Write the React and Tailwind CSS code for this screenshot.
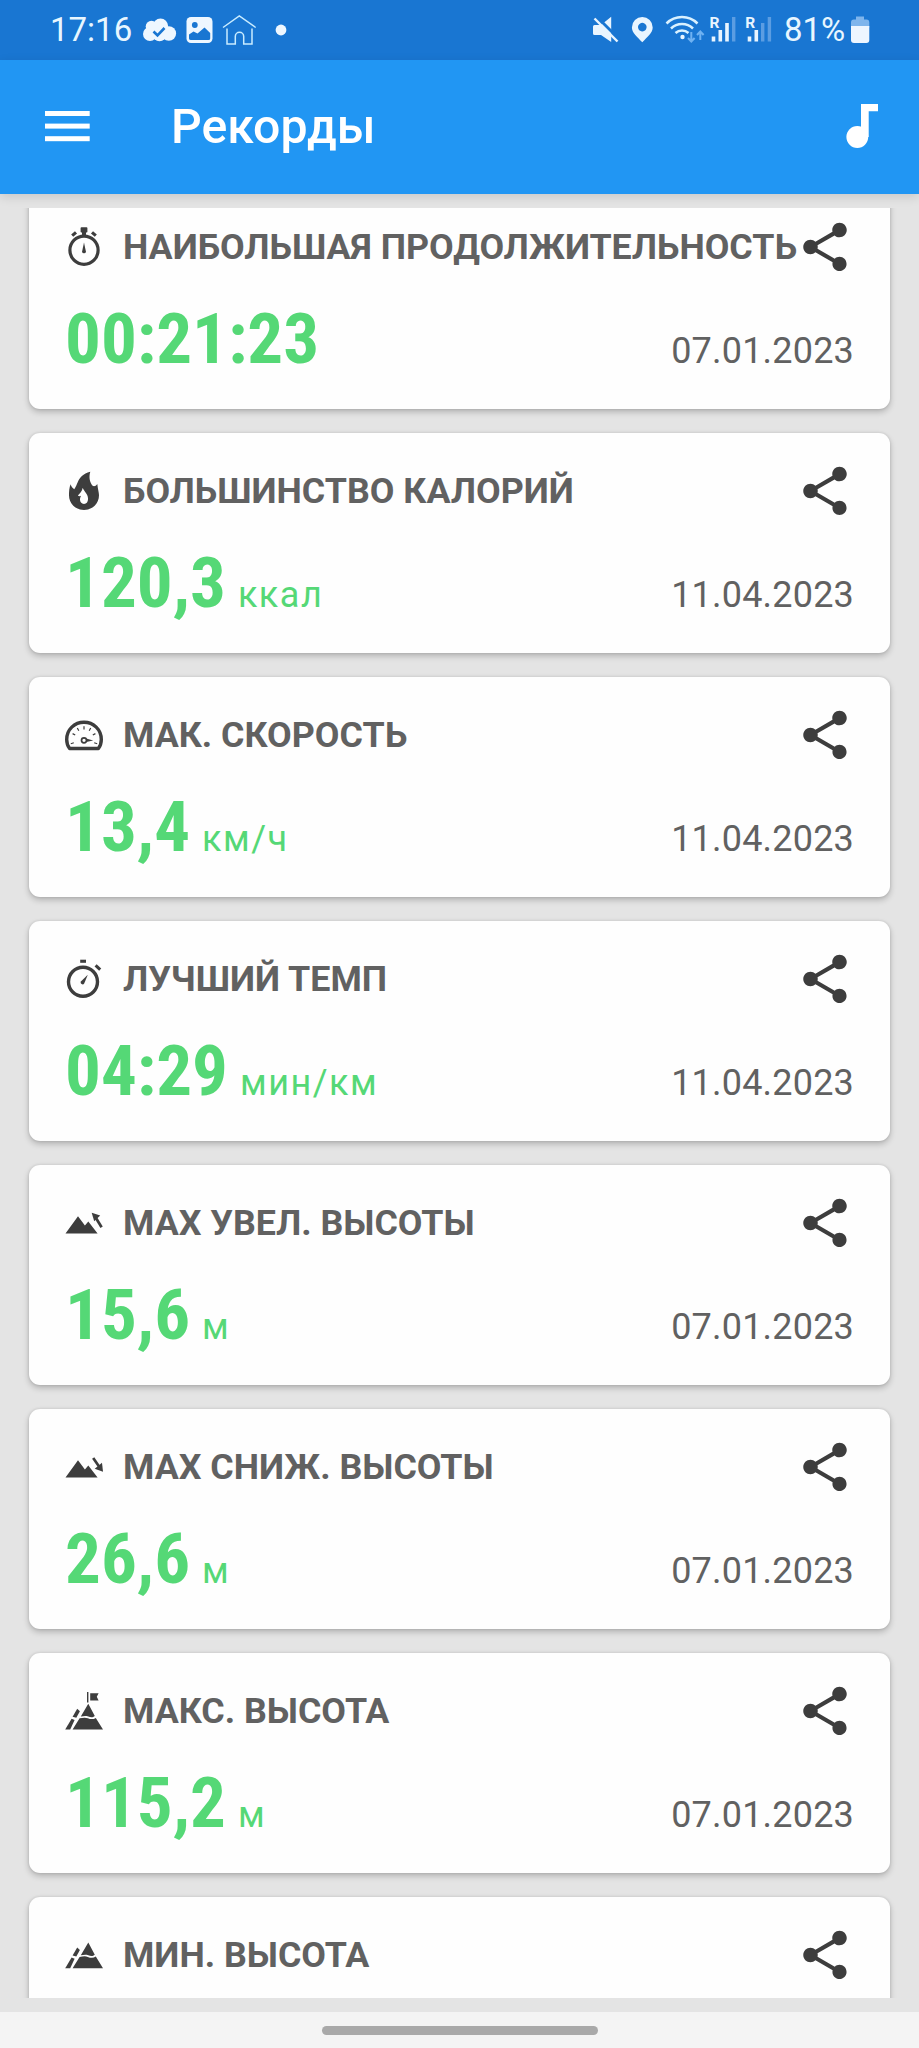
import React from "react";

const INK = "#3d3d3d";

function CardIcon({ children }) {
  return (
    <svg className="h-10 w-[38px] shrink-0 overflow-visible" viewBox="0 0 38 40" fill={INK}>
      {children}
    </svg>
  );
}

function DurationIcon() {
  return (
    <CardIcon>
      <circle cx="19" cy="22.2" r="14.1" fill="none" stroke={INK} strokeWidth="3.2" />
      <rect x="15.6" y="-0.8" width="6.8" height="5.4" rx="0.8" />
      <rect x="17" y="3" width="4" height="5" />
      <path d="M7.2 7.6 11 4.4M30.8 7.6 27 4.4" stroke={INK} strokeWidth="3.2" />
      <path d="M19 14.6 20.9 23.4a1.9 1.9 0 1 1-3.8 0z" />
    </CardIcon>
  );
}

function FlameIcon() {
  return (
    <CardIcon>
      <path
        fillRule="evenodd"
        d="M25.3-.2C18 1.500 14.500 6 12.600 10.500 11.500 13 10.800 15 9.300 17.300 7.600 16.200 6.200 14.600 5.600 12.300 4.300 15.500 4 19.500 4 23.300 4 31.500 10.500 37.900 19 37.900S34 31.500 34 23.300C34 20 32.800 17.300 32.300 12 30.800 14.200 29 14.800 27.600 13.800 25 10.800 23.500 5.500 25.300-.2zM17.800 15.800C18.500 19 22.800 21.500 23 26.300 23.200 29.800 21.600 32 19 32S15 29.800 15 27.500C15 26 15.500 25 16 23.800 15 24.600 13.800 24.300 12.800 23.600 14.800 21.500 17 19.300 17.800 15.800z"
      />
    </CardIcon>
  );
}

function SpeedIcon() {
  return (
    <CardIcon>
      <path
        d="M4.600 32.500C2.700 30 1.700 26.800 1.700 23.400 1.700 13.600 9.500 6.200 19 6.200S36.300 13.600 36.300 23.400C36.300 26.800 35.300 30 33.400 32.500z"
        fill="none"
        stroke={INK}
        strokeWidth="3.400"
        strokeLinejoin="round"
      />
      <path
        d="M19 10.200v3.200M12.300 12l1.500 2.700M25.700 12l-1.500 2.700M7.600 17.600l2.600 1.400M30.400 17.600l-2.600 1.400M5.800 27.800l3-1M32.200 27.800l-3-1"
        stroke={INK}
        strokeWidth="1.200"
      />
      <circle cx="19" cy="24.300" r="2.500" fill="none" stroke={INK} strokeWidth="1.700" />
      <path d="M21.200 22.600 28.200 24.400 21.200 26z" />
    </CardIcon>
  );
}

function PaceIcon() {
  return (
    <CardIcon>
      <circle cx="18" cy="21.800" r="14.500" fill="none" stroke={INK} strokeWidth="3.400" />
      <rect x="15.200" y="-0.300" width="5.800" height="3.100" />
      <path d="M30.600 5.400 35.200 9.600" stroke={INK} strokeWidth="3.100" />
      <path d="M22.800 14.800 19.200 23.400a1.900 1.900 0 1 1-3.300-1.900z" />
    </CardIcon>
  );
}

const MOUNTAIN = "M.5 29.600 13 12.200 19.900 21.400 23.300 17.600 32.600 29.600z";

function AscentIcon() {
  return (
    <CardIcon>
      <path d={MOUNTAIN} />
      <path d="M26.700 8.800 35.200 11.600 29.200 17.300z" />
      <path d="M30.500 13.200 36.600 23.200" stroke={INK} strokeWidth="2.700" />
    </CardIcon>
  );
}

function DescentIcon() {
  return (
    <CardIcon>
      <path d={MOUNTAIN} />
      <path d="M38 23.800 37 14.800 29.700 20.800z" />
      <path d="M28.200 10 34.400 19" stroke={INK} strokeWidth="2.700" />
    </CardIcon>
  );
}

function Peaks() {
  return (
    <>
      <path d="M23.300 11.800 29.800 24C27.500 26 25.500 25.300 23.300 24.500 20.800 23.600 18.500 24 15.800 24.600z" />
      <path d="M14.600 26.300C18 25.600 20.500 25.300 22.800 26.200 25.500 27.300 28.300 27.600 30.800 25.900L38 37.500H7.600z" />
      <path d="M12.200 16.800 14.900 19.200 11.300 25.800 7.600 24.800z" />
      <path d="M6.600 26.800 9.600 28 5.200 37.500H.2z" />
    </>
  );
}

function MaxHeightIcon() {
  return (
    <CardIcon>
      <Peaks />
      <path d="M22.700 0V10.600" stroke={INK} strokeWidth="1.400" />
      <path d="M25.200 1.200H33.600L31.800 4.800 33.600 8.500H25.200z" />
    </CardIcon>
  );
}

function MinHeightIcon() {
  return (
    <CardIcon>
      <g transform="translate(0 -5.300)">
        <Peaks />
      </g>
    </CardIcon>
  );
}

function ShareIcon() {
  return (
    <svg className="-mt-0.5 size-[58px] shrink-0" viewBox="0 0 24 24" fill={INK}>
      <path d="M18 16.080c-.76 0-1.440.3-1.960.770L8.910 12.700c.05-.230.090-.460.090-.700s-.040-.470-.090-.700l7.050-4.110c.54.500 1.250.810 2.040.810 1.660 0 3-1.340 3-3s-1.340-3-3-3-3 1.340-3 3c0 .240.040.470.090.700L8.040 9.810C7.500 9.310 6.790 9 6 9c-1.660 0-3 1.340-3 3s1.340 3 3 3c.79 0 1.500-.310 2.040-.810l7.120 4.160c-.05.210-.080.430-.080.650 0 1.610 1.310 2.920 2.920 2.920 1.610 0 2.920-1.310 2.920-2.920s-1.310-2.920-2.920-2.920z" />
    </svg>
  );
}

const RECORDS = [
  { icon: DurationIcon, label: "НАИБОЛЬШАЯ ПРОДОЛЖИТЕЛЬНОСТЬ", value: "00:21:23", date: "07.01.2023" },
  { icon: FlameIcon, label: "БОЛЬШИНСТВО КАЛОРИЙ", value: "120,3", unit: "ккал", date: "11.04.2023" },
  { icon: SpeedIcon, label: "МАК. СКОРОСТЬ", value: "13,4", unit: "км/ч", date: "11.04.2023" },
  { icon: PaceIcon, label: "ЛУЧШИЙ ТЕМП", value: "04:29", unit: "мин/км", date: "11.04.2023" },
  { icon: AscentIcon, label: "MAX УВЕЛ. ВЫСОТЫ", value: "15,6", unit: "м", date: "07.01.2023" },
  { icon: DescentIcon, label: "MAX СНИЖ. ВЫСОТЫ", value: "26,6", unit: "м", date: "07.01.2023" },
  { icon: MaxHeightIcon, label: "МАКС. ВЫСОТА", value: "115,2", unit: "м", date: "07.01.2023" },
  { icon: MinHeightIcon, label: "МИН. ВЫСОТА", value: "", date: "" },
];

function RecordCard({ icon: Icon, label, value, unit, date }) {
  return (
    <article className="h-[220px] shrink-0 rounded-[11px] bg-[#fefefe] px-9 pt-[33px] shadow-[0_3px_6px_rgba(0,0,0,0.22),0_0_3px_rgba(0,0,0,0.12)]">
      <div className="flex h-[51px] items-center">
        <Icon />
        <h2 className="ml-5 w-0 grow whitespace-nowrap text-[35.8px] leading-[51px] font-bold text-[#616161]">
          {label}
        </h2>
        <ShareIcon />
      </div>
      <div className="mt-6 flex items-baseline leading-[84px]">
        <span className="font-['Roboto_Condensed',Roboto,sans-serif] text-[71px] font-bold text-[#55d876]">
          {value}
        </span>
        {unit && <span className="ml-3 text-[36px] tracking-[1.500px] text-[#55d876]">{unit}</span>}
        <span className="ml-auto text-[36px] tracking-[0.200px] text-[#616161]">{date}</span>
      </div>
    </article>
  );
}

function StatusBar() {
  return (
    <div className="flex h-[60px] items-center bg-[#1976d2] pl-[50px] text-[33px] leading-[58px] text-[#e8f6ff]">
      <span className="w-[82px]">17:16</span>
      <svg className="h-[60px] w-[168px]" viewBox="132 0 168 60" fill="#eef7ff">
        <circle cx="150" cy="34" r="7" />
        <circle cx="151.500" cy="26.500" r="5.800" />
        <circle cx="160.500" cy="26" r="7.600" />
        <circle cx="168.800" cy="33.500" r="7.300" />
        <circle cx="159.500" cy="34.500" r="6.800" />
        <path d="M153.500 31.500 157.500 35.300 164.500 28" fill="none" stroke="#1976d2" strokeWidth="2.600" />
        <rect x="186.500" y="17" width="26" height="26" rx="4.500" />
        <circle cx="194.800" cy="25" r="2.900" fill="#1976d2" />
        <path d="M189 34.500 193.500 31.500 197.500 33.500 204.500 27.500 210.200 33V38.500Q210.200 40 208.500 40H191Q189 40 189 38.500z" fill="#1976d2" />
        <g fill="none" stroke="#c9ecff" strokeWidth="1.500">
          <path d="M223 27.500 239.300 16 255.700 27.500" />
          <path d="M227 28.500V44H235.300V36.500a4.200 4.200 0 0 1 8.400 0V44H252V28.500" />
        </g>
        <circle cx="281" cy="30" r="5.400" />
      </svg>
      <svg className="ml-[284px] h-[60px] w-[200px]" viewBox="584 0 200 60" fill="#e9f5ff">
        <path d="M593 26.500Q593 25 594.500 25H601L611.200 16.800V42L601 35H594.500Q593 35 593 33.500z" />
        <path d="M596.500 16.500 620 40" stroke="#1976d2" strokeWidth="3" />
        <path d="M594.500 18.500 617.500 41.500" stroke="#e9f5ff" strokeWidth="2.400" />
        <path fillRule="evenodd" d="M642.300 17a10.400 10.400 0 0 1 10.400 10.400C652.700 33 647 37 642.300 42.200 637.600 37 631.900 33 631.900 27.400A10.400 10.400 0 0 1 642.300 17zM642.300 22.800a4.300 4.300 0 1 0 .01 0z" />
        <g fill="none" stroke="#d9f1ff" strokeWidth="2.500">
          <path d="M666.500 23.500a22 22 0 0 1 31 0" />
          <path d="M671 28.500a15.500 15.500 0 0 1 22 0" />
          <path d="M675.500 33a9.500 9.500 0 0 1 13 0" />
        </g>
        <circle cx="682.500" cy="37" r="2.200" />
        <path d="M691.300 32v9M688 38l3.300 3.500 3.300-3.500M700.300 40v-8M697 35l3.300-3.500 3.300 3.500" fill="none" stroke="#6fb2f2" strokeWidth="2" />
        <text x="709.500" y="27.700" fontSize="15.500" fontWeight="700">R</text>
        <rect x="711.700" y="36.500" width="3.600" height="5" />
        <rect x="718.500" y="30" width="3.600" height="11.500" />
        <rect x="725.200" y="23" width="3.600" height="18.500" />
        <rect x="732" y="17" width="3.400" height="24.500" fill="#5b9de2" />
        <text x="745.200" y="27.700" fontSize="15.500" fontWeight="700">R</text>
        <rect x="747.700" y="36.500" width="3.600" height="5" />
        <rect x="754.500" y="30" width="3.600" height="11.500" />
        <rect x="761" y="23" width="3.400" height="18.500" fill="#5b9de2" />
        <rect x="767.700" y="17" width="3.400" height="24.500" fill="#5b9de2" />
      </svg>
      <span className="w-[62px] whitespace-nowrap">81%</span>
      <svg className="h-[60px] w-[30px]" viewBox="846 0 30 60">
        <path d="M856 16.500h8v3h2.500q2.800 0 2.800 3v5H851v-5q0-3 2.800-3H856z" fill="#7fb5ec" />
        <path d="M851 26h18.300v14q0 3-3 3H854q-3 0-3-3z" fill="#eef6ff" />
      </svg>
    </div>
  );
}

function AppBar() {
  return (
    <header className="relative z-10 flex h-[134px] items-center bg-[#2196f3] text-white shadow-[0_3px_10px_rgba(0,0,0,0.12)]">
      <svg className="ml-[45px] h-[134px] w-[45px]" viewBox="45 60 45 134" fill="#fff">
        <rect x="45" y="111" width="44.700" height="5" />
        <rect x="45" y="123.600" width="44.700" height="5" />
        <rect x="45" y="136.200" width="44.700" height="5" />
      </svg>
      <h1 className="ml-[81px] text-[48.200px] leading-[138px] font-medium">Рекорды</h1>
      <svg className="mr-10 ml-auto h-[134px] w-[34px]" viewBox="845 60 34 134" fill="#fff">
        <circle cx="857.300" cy="137" r="10.900" />
        <path d="M861 104H878V111.300H868.700V137H861z" />
      </svg>
    </header>
  );
}

export default function App() {
  return (
    <div className="flex h-[2048px] w-[919px] flex-col overflow-hidden bg-[#e4e4e4] font-[Roboto,sans-serif]">
      <StatusBar />
      <AppBar />
      <main className="mt-3.5 flex h-[1790px] shrink-0 flex-col justify-start overflow-hidden px-[29px]">
        <div className="-mt-[19px] flex flex-col gap-6">
          {RECORDS.map((record) => (
            <RecordCard key={record.label} {...record} />
          ))}
        </div>
      </main>
      <footer className="mt-auto flex h-9 shrink-0 items-center justify-center bg-[#f4f4f4]">
        <div className="h-[9px] w-[276px] rounded-full bg-[#a9a9a9]" />
      </footer>
    </div>
  );
}
